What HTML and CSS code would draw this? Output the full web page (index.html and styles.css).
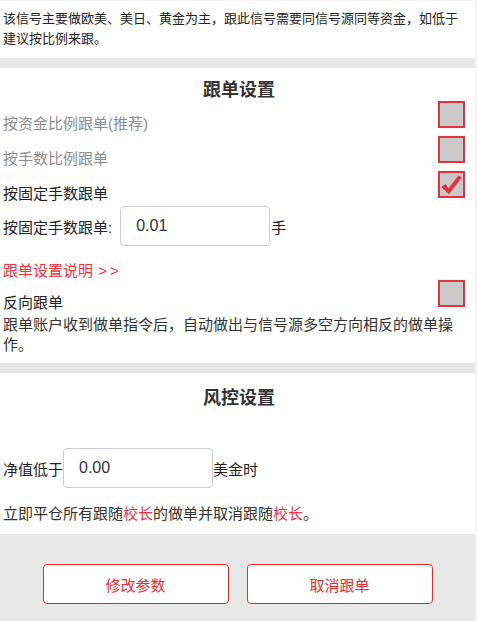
FILE: index.html
```html
<!DOCTYPE html>
<html lang="zh-CN">
<head>
  <meta charset="UTF-8">
  <meta name="viewport" content="width=device-width, initial-scale=1.0">
  <title>跟单设置</title>
  <link rel="stylesheet" href="styles.css">
</head>
<body>
  <div class="page">
    <!-- 信号说明 -->
    <div class="section intro">
      该信号主要做欧美、美日、黄金为主，跟此信号需要同信号源同等资金，如低于建议按比例来跟。
    </div>

    <!-- 跟单设置 -->
    <div class="section">
      <h2 class="title">跟单设置</h2>

      <div class="check-row">
        <span class="check-label muted">按资金比例跟单(推荐)</span>
        <span class="box"></span>
      </div>
      <div class="check-row">
        <span class="check-label muted">按手数比例跟单</span>
        <span class="box"></span>
      </div>
      <div class="check-row">
        <span class="check-label">按固定手数跟单</span>
        <span class="box checked">
          <svg viewBox="0 0 27 27" width="25" height="25"><path d="M1.5 16.5 L6.5 13 L10 18 L22 2.5 L25.5 5.5 L10.5 25 Z" fill="#e2323e"/></svg>
        </span>
      </div>

      <div class="field-row">
        <span>按固定手数跟单:</span>
        <input class="field lots" type="text" value="0.01">
        <span class="unit">手</span>
      </div>

      <a class="help-link" href="#">跟单设置说明 <span class="arrows">&gt;&gt;</span></a>

      <div class="check-row reverse">
        <span class="check-label">反向跟单</span>
        <span class="box"></span>
      </div>
      <p class="desc">跟单账户收到做单指令后，自动做出与信号源多空方向相反的做单操作。</p>
    </div>

    <!-- 风控设置 -->
    <div class="section risk">
      <h2 class="title">风控设置</h2>

      <div class="field-row equity">
        <span>净值低于</span>
        <input class="field" type="text" value="0.00">
        <span>美金时</span>
      </div>
      <p class="note">立即平仓所有跟随<em>校长</em>的做单并取消跟随<em>校长</em>。</p>
    </div>

    <!-- 按钮 -->
    <div class="actions">
      <button class="btn">修改参数</button>
      <button class="btn">取消跟单</button>
    </div>
  </div>
</body>
</html>
```

FILE: styles.css
```css
body {
  margin: 0;
  padding: 1px 0 0;
  background: #f4f4f4;
  font-family: "Liberation Sans", "Noto Sans CJK SC", sans-serif;
  color: #222;
}
.page {
  width: 475px;
  background: #e7e7e7;
}
.section {
  background: #fff;
  padding: 0 0 0 3px;
  margin-bottom: 10px;
}
.intro {
  padding: 8px 10px 10px 3px;
  font-size: 13px;
  line-height: 19.5px;
  color: #222;
}
.title {
  margin: 0;
  padding: 11px 0 0;
  text-align: center;
  font-size: 18px;
  line-height: 22px;
  font-weight: bold;
  color: #333;
}
.check-row {
  display: flex;
  justify-content: space-between;
  align-items: flex-start;
  height: 35px;
}
.check-label {
  padding-top: 12px;
  font-size: 15px;
  line-height: 21px;
}
.muted {
  color: #8c8c8c;
}
.box {
  box-sizing: border-box;
  width: 27px;
  height: 27px;
  margin-right: 10px;
  border: 2px solid #e2323e;
  background: #c9c9c9;
  display: flex;
  align-items: center;
  justify-content: center;
}
.field-row {
  display: flex;
  align-items: center;
  height: 40px;
  font-size: 15px;
}
.field {
  box-sizing: border-box;
  width: 150px;
  height: 40px;
  border: 1px solid #ccc;
  border-radius: 4px;
  padding: 0 15px;
  font-family: "Liberation Sans", sans-serif;
  font-size: 16px;
  color: #333;
}
.lots {
  margin-left: 8px;
}
.unit {
  margin-left: 1px;
}
.help-link {
  display: block;
  margin-top: 15px;
  font-size: 15px;
  line-height: 20px;
  color: #f2323c;
  text-decoration: none;
}
.arrows {
  letter-spacing: 3px;
  margin-left: 1px;
}
.reverse {
  margin-top: -1px;
}
.desc {
  margin: 0;
  padding-bottom: 8px;
  font-size: 15px;
  line-height: 20px;
  color: #333;
}
.risk {
  margin-bottom: 0;
}
.risk .title {
  padding-top: 14px;
}
.equity {
  margin-top: 39px;
}
.note {
  margin: 0;
  padding: 16px 0 10px;
  font-size: 15px;
  line-height: 20px;
  color: #333;
}
.note em {
  font-style: normal;
  color: #f2323c;
}
.actions {
  display: flex;
  justify-content: center;
  gap: 18px;
  padding: 30px 0 30px;
  height: 40px;
}
.btn {
  width: 186px;
  height: 40px;
  background: #fff;
  border: 1px solid #ee2a30;
  border-radius: 4px;
  color: #ee2a30;
  font-family: "Noto Sans CJK SC", sans-serif;
  font-size: 15px;
}
```
